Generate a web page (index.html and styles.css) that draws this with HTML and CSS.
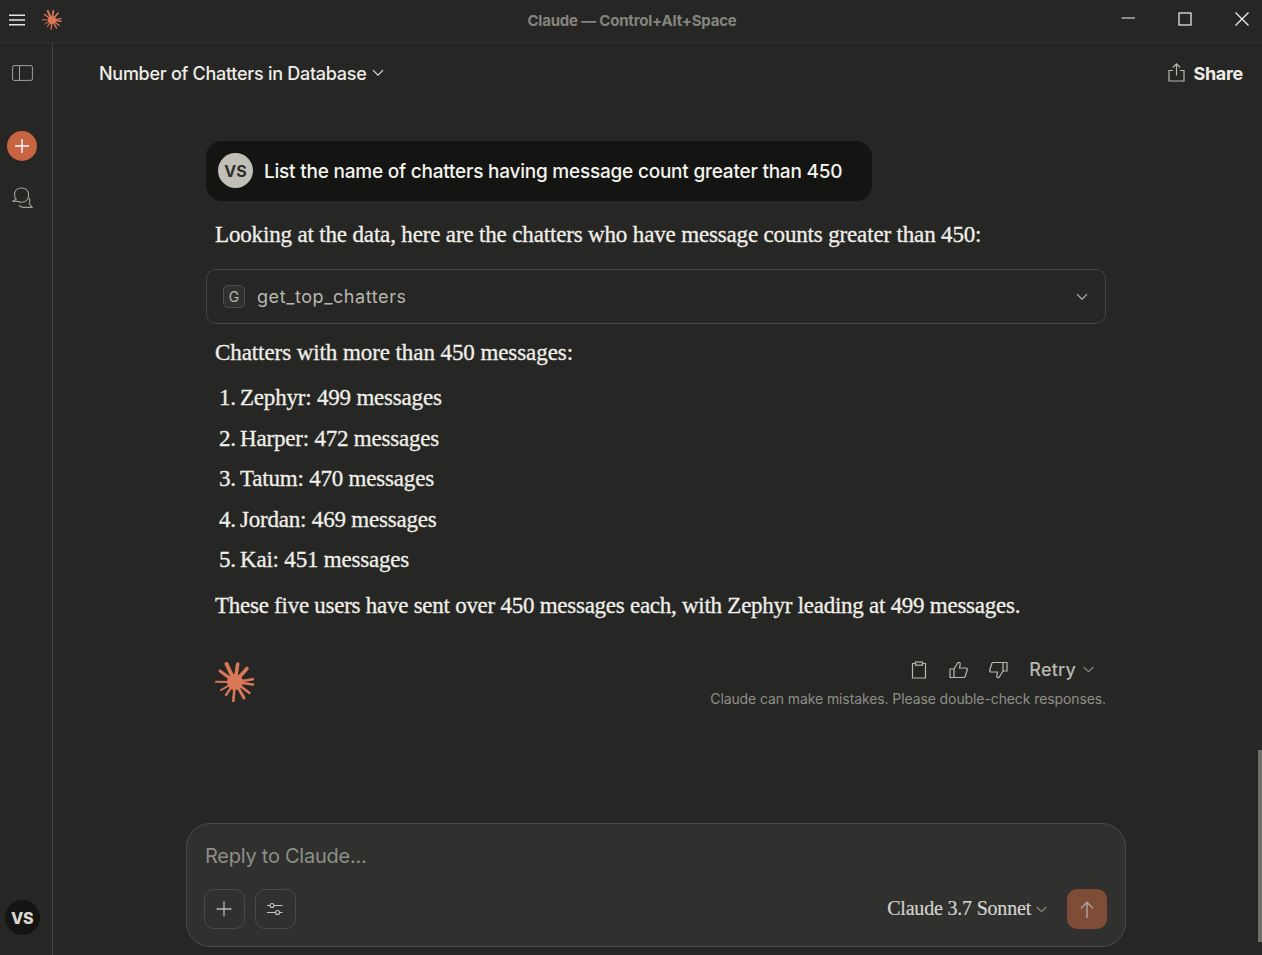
FILE: index.html
```html
<!DOCTYPE html>
<html lang="en">

<head>
  <meta charset="UTF-8">
  <meta name="viewport" content="width=device-width, initial-scale=1.0">
  <title>Claude</title>
  <link rel="stylesheet" href="styles.css">
</head>

<body>
  <svg class="defs" width="0" height="0">
    <symbol id="spark" viewBox="0 0 40 40">
      <circle cx="20" cy="20" r="8" fill="#d97757" />
      <g stroke="#d97757" stroke-linecap="round" fill="none">
        <path stroke-width="4" d="M20 20L11.500 2" />
        <path stroke-width="3.600" d="M20 20L22.700 2" />
        <path stroke-width="3.600" d="M20 20L32 6.500" />
        <path stroke-width="3" d="M20 20L5 9" />
        <path stroke-width="2.400" d="M20 20L38 17.300" />
        <path stroke-width="2" d="M20 20L1 19.700" />
        <path stroke-width="2.600" d="M20 20L38 22.500" />
        <path stroke-width="2.600" d="M20 20L34.500 31" />
        <path stroke-width="3" d="M20 20L29 36" />
        <path stroke-width="2.600" d="M20 20L18.300 39" />
        <path stroke-width="2.200" d="M20 20L11 33" />
        <path stroke-width="2" d="M20 20L6 28" />
      </g>
    </symbol>
  </svg>

  <header class="titlebar">
    <div class="titlebar-left">
      <svg class="menu-icon" width="16" height="12" viewBox="0 0 16 12">
        <path d="M0 1.200H16M0 6H16M0 10.800H16" stroke="#e4e3de" stroke-width="1.600" />
      </svg>
      <svg class="small-spark" width="20" height="20">
        <use href="#spark" />
      </svg>
    </div>
    <div class="titlebar-name">Claude — Control+Alt+Space</div>
    <div class="window-buttons">
      <svg width="14" height="14" viewBox="0 0 14 14">
        <path d="M.5 6H14" stroke="#f2f2f0" stroke-width="1" />
      </svg>
      <svg width="14" height="14" viewBox="0 0 14 14">
        <rect x="1" y="1" width="12" height="12" fill="none" stroke="#f2f2f0" stroke-width="1.200" />
      </svg>
      <svg width="14" height="14" viewBox="0 0 14 14">
        <path d="M.5 .5L13.500 13.500M13.500 .5L.5 13.500" stroke="#f2f2f0" stroke-width="1.200" />
      </svg>
    </div>
  </header>

  <div class="app">
    <nav class="sidebar">
      <svg class="side-toggle" width="21" height="16" viewBox="0 0 21 16" fill="none" stroke="#a3a29b">
        <rect x=".6" y=".6" width="19.800" height="14.800" rx="1.500" />
        <path d="M7.500 .6V15.400" />
      </svg>
      <div class="new-chat">
        <svg width="14" height="14" viewBox="0 0 14 14">
          <path d="M7 0V14M0 7H14" stroke="#fff" stroke-width="1.400" />
        </svg>
      </div>
      <svg class="chats-icon" width="21" height="22" viewBox="0 0 21 22" fill="none" stroke="#a3a29b" stroke-width="1.100">
        <path d="M9.500 1C5 1 2.500 4 2.500 7.500C2.500 9.500 3.200 11 4.200 12.200L.8 14.200L6 14.400C7.200 15 8.300 15.200 9.500 15.200C14 15.200 16.600 12 16.600 8C16.600 4 14 1 9.500 1Z" />
        <path d="M16.600 11C18 12.500 18 15 17.200 16.500L20 20.400H11C9.500 20.400 8 19.500 6.800 18.200" />
      </svg>
      <div class="side-spacer"></div>
      <div class="side-user">VS</div>
    </nav>

    <main class="main">
      <div class="chat-header">
        <div class="chat-title">
          Number of Chatters in Database
          <svg width="12" height="8" viewBox="0 0 12 8" fill="none" stroke="#e4e3de" stroke-width="1.200">
            <path d="M1 1.200L6 6.200L11 1.200" />
          </svg>
        </div>
        <div class="share">
          <svg width="17" height="19" viewBox="0 0 17 19" fill="none" stroke="#b8b7b0" stroke-width="1.200">
            <path d="M5 7.500H1V18H16V7.500H12" />
            <path d="M8.500 12.500V1M4.800 4.500L8.500 .9L12.200 4.500" />
          </svg>
          <span>Share</span>
        </div>
      </div>

      <div class="thread">
        <div class="user-msg">
          <div class="avatar">VS</div>
          <div class="user-text">List the name of chatters having message count greater than 450</div>
        </div>

        <p class="reply first">Looking at the data, here are the chatters who have message counts greater than 450:</p>

        <div class="tool-box">
          <span class="tool-chip">G</span>
          <span class="tool-name">get_top_chatters</span>
          <svg class="tool-arrow" width="12" height="8" viewBox="0 0 12 8" fill="none" stroke="#b8b7b0" stroke-width="1.200">
            <path d="M1 1.200L6 6.200L11 1.200" />
          </svg>
        </div>

        <p class="reply after-tool">Chatters with more than 450 messages:</p>
        <ol class="reply-list">
          <li>Zephyr: 499 messages</li>
          <li>Harper: 472 messages</li>
          <li>Tatum: 470 messages</li>
          <li>Jordan: 469 messages</li>
          <li>Kai: 451 messages</li>
        </ol>
        <p class="reply last">These five users have sent over 450 messages each, with Zephyr leading at 499 messages.</p>

        <div class="msg-footer">
          <svg class="big-spark" width="40" height="40">
            <use href="#spark" />
          </svg>
          <div class="footer-right">
            <div class="actions">
              <svg class="copy-icon" width="16" height="18" viewBox="0 0 16 18" fill="none" stroke="#b8b7b0" stroke-width="1.200">
                <path d="M4.500 2.500H1.500V17H14.500V2.500H11.500" />
                <rect x="4.500" y="1" width="7" height="3.200" />
              </svg>
              <svg width="19" height="18" viewBox="0 0 19 18" fill="none" stroke="#b8b7b0" stroke-width="1.200">
                <path d="M1 8H5V16.500H1ZM5 8L9 1.500C10.500 1 11.500 2 11.200 3.500L10.500 7H17C18 7 18.500 8 18.200 9L16.200 15.500C16 16.200 15.400 16.500 14.800 16.500H5" />
              </svg>
              <svg width="19" height="18" viewBox="0 0 19 18" fill="none" stroke="#b8b7b0" stroke-width="1.200">
                <path d="M18 10H14V1.500H18ZM14 10L10 16.500C8.500 17 7.500 16 7.800 14.500L8.500 11H2C1 11 .5 10 .8 9L2.800 2.500C3 1.800 3.600 1.500 4.200 1.500H14" />
              </svg>
              <span class="retry">Retry</span>
              <svg class="retry-arrow" width="11" height="7" viewBox="0 0 11 7" fill="none" stroke="#8a8983" stroke-width="1.100">
                <path d="M.7 1L5.500 5.700L10.300 1" />
              </svg>
            </div>
            <div class="disclaimer">Claude can make mistakes. Please double-check responses.</div>
          </div>
        </div>
      </div>

      <div class="composer">
        <div class="placeholder">Reply to Claude...</div>
        <div class="composer-row">
          <div class="tool-btn">
            <svg width="16" height="16" viewBox="0 0 16 16">
              <path d="M8 .5V15.500M.5 8H15.500" stroke="#b8b7b0" stroke-width="1.300" />
            </svg>
          </div>
          <div class="tool-btn">
            <svg width="16" height="14" viewBox="0 0 16 14" fill="none" stroke="#c4c3bc" stroke-width="1.100">
              <path d="M0 3.500H3M7 3.500H15.500M0 10.500H8.500M12.500 10.500H15.500" />
              <circle cx="5" cy="3.500" r="2" />
              <circle cx="10.500" cy="10.500" r="2" />
            </svg>
          </div>
          <div class="model">
            Claude 3.7 Sonnet
            <svg width="11" height="7" viewBox="0 0 11 7" fill="none" stroke="#8a8983" stroke-width="1.100">
              <path d="M.7 1L5.500 5.700L10.300 1" />
            </svg>
          </div>
          <div class="send">
            <svg width="14" height="17" viewBox="0 0 14 17" fill="none" stroke="#a8a29c" stroke-width="1.500">
              <path d="M7 17V1.200M1 7.200L7 1.200L13 7.200" />
            </svg>
          </div>
        </div>
      </div>
      <div class="scroll-thumb"></div>
    </main>
  </div>
</body>

</html>
```

FILE: styles.css
```css
* {
  box-sizing: border-box;
}

body {
  margin: 0;
  height: 955px;
  overflow: hidden;
  background-color: #262624;
  color: #f5f4ef;
  font-family: Inter, "Noto Sans", sans-serif;
}

.defs {
  display: block;
  height: 0;
}

/* title bar */
.titlebar {
  height: 43px;
  display: grid;
  grid-template-columns: 1fr auto 1fr;
  align-items: center;
  border-bottom: 1px solid #30302e;
}

.titlebar-left {
  display: flex;
  align-items: center;
  padding-left: 9px;
}

.menu-icon {
  margin-top: -2px;
}

.small-spark {
  margin-left: 17px;
  margin-top: -2px;
}

.titlebar-name {
  margin-top: -2px;
  margin-left: 2px;
  font-size: 15px;
  font-weight: 700;
  letter-spacing: -0.2px;
  color: #85847e;
}

.window-buttons {
  display: flex;
  justify-content: flex-end;
  gap: 43px;
  padding-right: 13px;
  margin-top: -5px;
}

/* layout */
.app {
  height: 912px;
  display: flex;
}

.sidebar {
  width: 53px;
  flex: none;
  display: flex;
  flex-direction: column;
  align-items: center;
  border-right: 1px solid #454542;
  padding-bottom: 20px;
  padding-right: 8px;
}

.side-toggle {
  margin-top: 22px;
}

.new-chat {
  width: 30px;
  height: 30px;
  margin-top: 50px;
  border-radius: 50%;
  background-color: #c96442;
  display: flex;
  align-items: center;
  justify-content: center;
}

.chats-icon {
  margin-top: 26px;
}

.side-spacer {
  flex: 1;
}

.side-user {
  width: 35px;
  height: 35px;
  border-radius: 50%;
  background-color: #141413;
  color: #d9d8d0;
  font-size: 16px;
  font-weight: 800;
  display: flex;
  align-items: center;
  justify-content: center;
  letter-spacing: -0.5px;
}

.main {
  flex: 1;
  position: relative;
  display: flex;
  flex-direction: column;
  align-items: center;
  padding-right: 3px;
}

.chat-header {
  width: 100%;
  height: 62px;
  display: flex;
  align-items: center;
  justify-content: space-between;
  padding: 0 16px 2px 46px;
}

.chat-title {
  display: flex;
  align-items: center;
  gap: 6px;
  font-size: 18px;
  font-weight: 500;
  letter-spacing: -0.28px;
  color: #eeede8;
}

.share {
  display: flex;
  align-items: center;
  gap: 8px;
  font-size: 18px;
  font-weight: 700;
  letter-spacing: -0.3px;
  color: #eeede8;
}

.share svg {
  margin-top: -1px;
}

/* messages */
.thread {
  width: 900px;
  flex: 1;
  padding-top: 36px;
}

.user-msg {
  width: 666px;
  height: 60px;
  display: flex;
  align-items: center;
  gap: 11px;
  padding-left: 12px;
  background-color: #141413;
  border-radius: 16px;
}

.avatar {
  width: 35px;
  height: 35px;
  flex: none;
  border-radius: 50%;
  background-color: #c2c0b6;
  color: #30302e;
  font-size: 16px;
  font-weight: 700;
  display: flex;
  align-items: center;
  justify-content: center;
  margin-top: -1px;
}

.user-text {
  font-size: 19px;
  font-weight: 500;
  letter-spacing: -0.22px;
}

.reply {
  margin: 0;
  padding-left: 9px;
  font-family: "Liberation Serif", serif;
  font-size: 23px;
  line-height: 32px;
  letter-spacing: -0.16px;
  -webkit-text-stroke: 0.3px #f0efe9;
  color: #f0efe9;
}

.reply.first {
  margin-top: 18px;
}

.reply.after-tool {
  margin-top: 13px;
  letter-spacing: -0.08px;
}

.reply.last {
  margin-top: 14px;
  letter-spacing: -0.26px;
}

.tool-box {
  height: 55px;
  margin-top: 18px;
  padding: 0 17px 0 16px;
  display: flex;
  align-items: center;
  border: 1px solid #454542;
  border-radius: 10px;
}

.tool-chip {
  width: 22px;
  height: 23px;
  border: 1px solid #4c4c49;
  border-radius: 5px;
  background-color: #30302e;
  color: #b8b7b0;
  font-size: 14px;
  display: flex;
  align-items: center;
  justify-content: center;
}

.tool-name {
  margin-left: 12px;
  margin-top: -1px;
  font-size: 18px;
  letter-spacing: 0.58px;
  color: #b8b7b0;
}

.tool-arrow {
  margin-left: auto;
}

.reply-list {
  margin: 13px 0 0;
  padding: 0 0 0 13px;
  list-style: none;
  counter-reset: item;
  font-family: "Liberation Serif", serif;
  font-size: 23px;
  line-height: 32px;
  letter-spacing: -0.2px;
  -webkit-text-stroke: 0.3px #f0efe9;
  color: #f0efe9;
}

.reply-list li {
  counter-increment: item;
  margin-bottom: 8.500px;
}

.reply-list li::before {
  content: counter(item) ".";
  display: inline-block;
  width: 21px;
}

.msg-footer {
  display: flex;
  justify-content: space-between;
  align-items: flex-start;
  margin-top: 40px;
  padding-left: 9px;
}

.footer-right {
  display: flex;
  flex-direction: column;
  align-items: flex-end;
  margin-top: -3px;
}

.actions {
  display: flex;
  align-items: center;
  gap: 21px;
  padding-right: 12px;
  color: #b8b7b0;
}

.copy-icon {
  margin-right: 1.500px;
}

.retry {
  font-size: 18px;
  font-weight: 500;
  letter-spacing: 0.2px;
}

.retry-arrow {
  margin-left: -14px;
}

.disclaimer {
  margin-top: 10px;
  font-size: 14px;
  letter-spacing: -0.1px;
  color: #8f8e87;
}

/* reply box */
.composer {
  width: 940px;
  height: 124px;
  margin-bottom: 8px;
  padding: 20px 18px 17px 17px;
  background-color: #30302e;
  border: 1px solid #4a4a47;
  border-radius: 24px;
  display: flex;
  flex-direction: column;
  justify-content: space-between;
}

.placeholder {
  margin-left: 1px;
  font-size: 20px;
  line-height: 24px;
  letter-spacing: -0.25px;
  color: #8f8e87;
}

.composer-row {
  display: flex;
  align-items: center;
  gap: 10px;
}

.tool-btn {
  width: 41px;
  height: 40px;
  border: 1px solid #4a4a47;
  border-radius: 10px;
  display: flex;
  align-items: center;
  justify-content: center;
}

.tool-btn svg {
  margin-left: -2px;
}

.model {
  margin-left: auto;
  margin-right: 10px;
  margin-top: -2px;
  display: flex;
  align-items: center;
  gap: 5px;
  font-family: "Liberation Serif", serif;
  font-size: 20px;
  letter-spacing: -0.2px;
  -webkit-text-stroke: 0.2px #d4d3cc;
  color: #d4d3cc;
}

.model svg {
  margin-top: 2px;
}

.send {
  width: 40px;
  height: 40px;
  border-radius: 10px;
  background-color: #7f4c37;
  display: flex;
  align-items: center;
  justify-content: center;
}

.scroll-thumb {
  position: absolute;
  right: 0;
  top: 707px;
  width: 4px;
  height: 192px;
  background-color: #6f6f6a;
}
```
